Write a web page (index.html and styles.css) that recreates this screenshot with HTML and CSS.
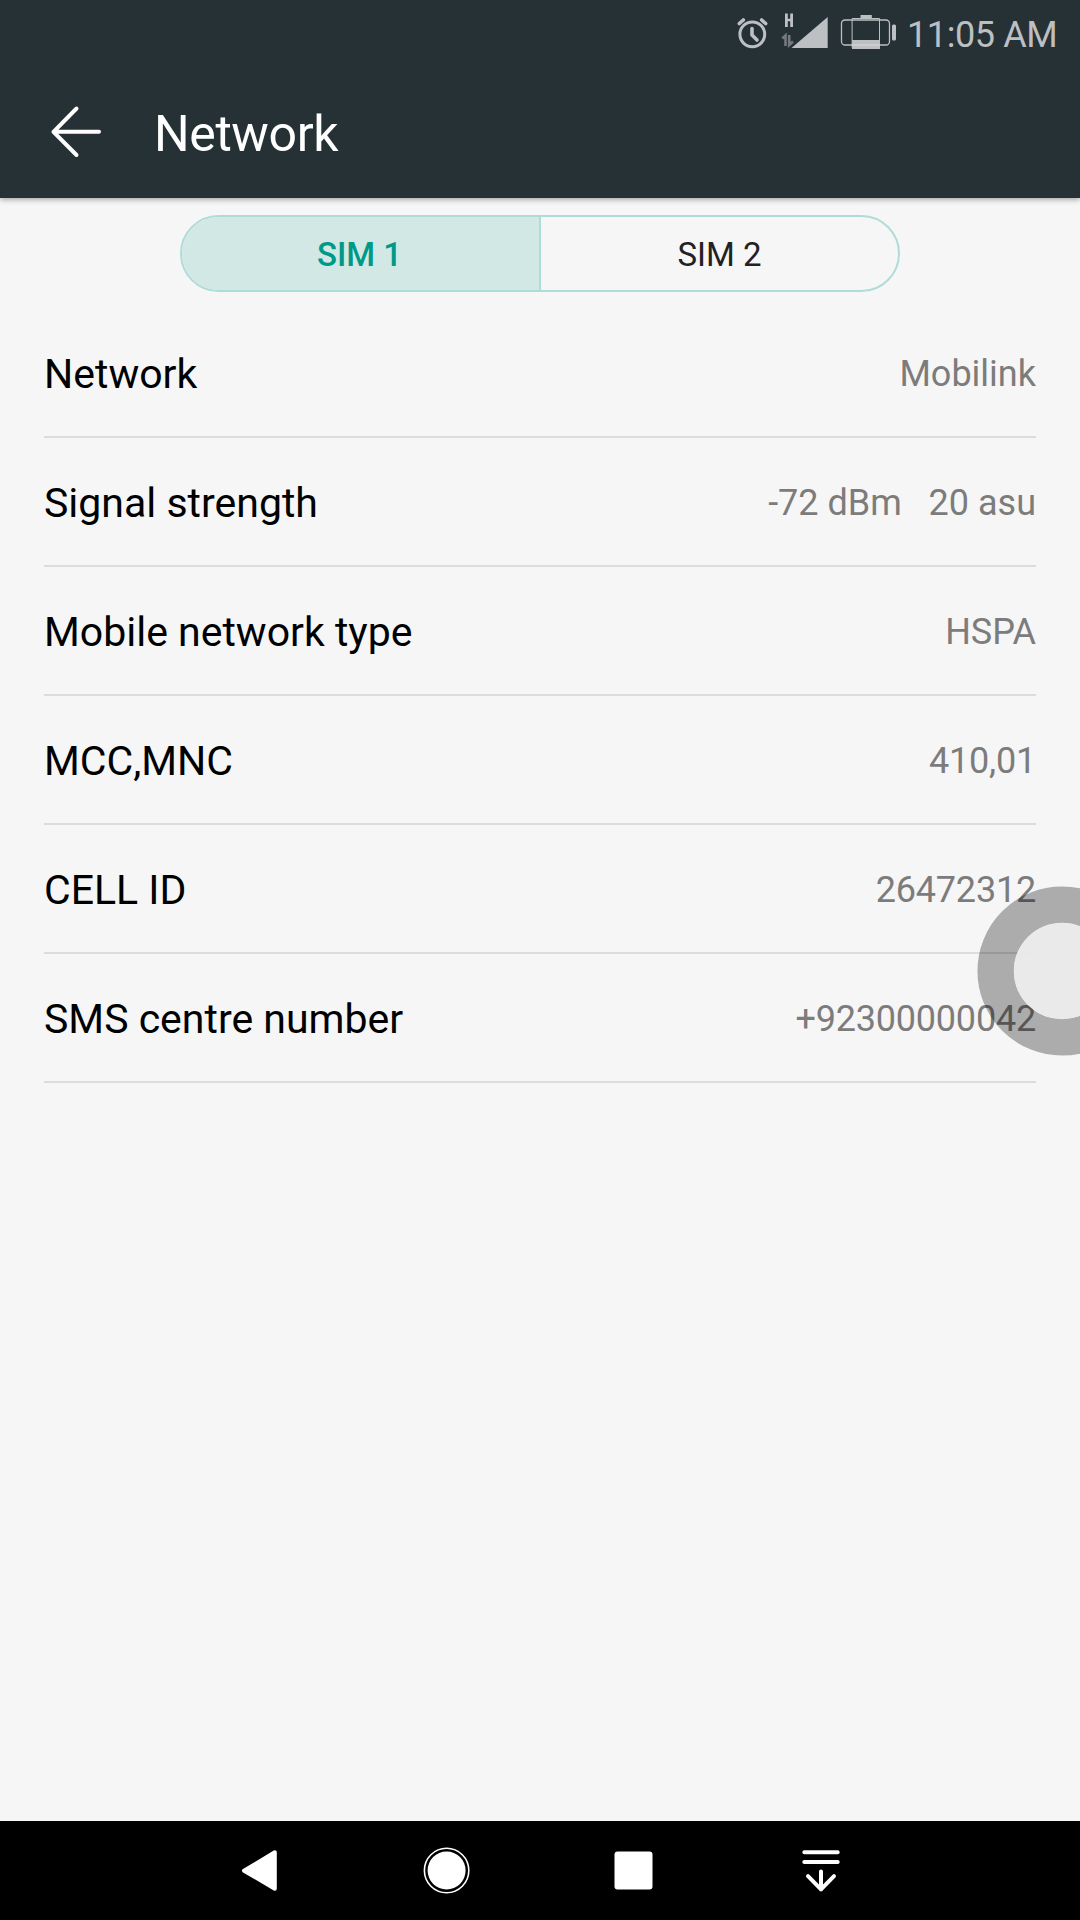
FILE: index.html
```html
<!DOCTYPE html>
<html lang="en">
<head>
<meta charset="utf-8">
<title>Network</title>
<link rel="stylesheet" href="styles.css">
</head>
<body>
<div class="screen">
  <header class="header">
    <div class="status-bar">
      <svg class="status-icons" width="180" height="60" viewBox="720 0 180 60">
        <g fill="none" stroke="#bdc0c2" stroke-linecap="round" stroke-linejoin="round">
          <circle cx="752.3" cy="34.3" r="12.4" stroke-width="3"/>
          <path d="M752 28.500v6.500l5 5" stroke-width="3.600"/>
          <path d="M739.300 23.500l4-3.500M765.700 23.500l-4-3.500" stroke-width="3.600"/>
          <rect x="841.500" y="20" width="48" height="25" rx="3.500" stroke-width="1.300"/>
          <rect x="852.500" y="18.500" width="27" height="29" stroke-width="1"/>
        </g>
        <g fill="#bdc0c2">
          <path d="M785 13.500h2.800v5.300h2.400v-5.300h2.800v13.500h-2.800v-5.700h-2.400v5.700h-2.800z"/>
          <path d="M791.500 48L827.700 17v31z"/>
          <rect x="860.500" y="15" width="11.300" height="3.500"/>
          <rect x="852" y="40" width="28" height="9"/>
          <rect x="892" y="24.500" width="4" height="16" rx="1.500"/>
        </g>
        <path d="M852 45h28" stroke="#d8dadb"/>
        <path d="M782.300 38.500L785.500 35.500V46M789.200 35V45L793 41.500" fill="none" stroke="#747a7d" stroke-width="2.600"/>
      </svg>
      <span class="clock">11:05 AM</span>
    </div>
    <div class="title-bar">
      <svg class="back" width="54" height="54" viewBox="48 105 54 54">
        <path d="M76.500 108.500L53.500 131.800L76.500 155M53.500 131.800H99" fill="none" stroke="#fff" stroke-width="4" stroke-linecap="round" stroke-linejoin="round"/>
      </svg>
      <h1 class="title">Network</h1>
    </div>
  </header>

  <main class="content">
    <div class="tabs">
      <div class="tab tab-active">SIM 1</div>
      <div class="tab">SIM 2</div>
    </div>
    <div class="list">
      <div class="row"><span class="label">Network</span><span class="value">Mobilink</span></div>
      <div class="row"><span class="label">Signal strength</span><span class="value">-72 dBm   20 asu</span></div>
      <div class="row"><span class="label">Mobile network type</span><span class="value">HSPA</span></div>
      <div class="row"><span class="label">MCC,MNC</span><span class="value digits">410,01</span></div>
      <div class="row"><span class="label">CELL ID</span><span class="value digits">26472312</span></div>
      <div class="row"><span class="label">SMS centre number</span><span class="value digits">+92300000042</span></div>
    </div>
  </main>

  <svg class="float-button" width="110" height="180" viewBox="970 881 110 180">
    <circle cx="1062" cy="971" r="66.300" fill="none" stroke="#000" stroke-opacity=".3" stroke-width="36.500"/>
    <circle cx="1062" cy="971" r="48.200" fill="#e9e9e9" fill-opacity=".97"/>
  </svg>

  <nav class="nav-bar">
    <svg width="56" height="56" viewBox="232 1843 56 56"><path d="M244 1870.700L274.800 1852.300V1888.700Z" fill="#fff" stroke="#fff" stroke-width="4" stroke-linejoin="round"/></svg>
    <svg width="56" height="56" viewBox="419 1843 56 56"><circle cx="446.600" cy="1870.500" r="19" fill="#fff"/><circle cx="446.600" cy="1870.500" r="22.200" fill="none" stroke="#fff" stroke-width="1.600"/></svg>
    <svg width="56" height="56" viewBox="606 1843 56 56"><rect x="614.500" y="1851.500" width="38" height="38" rx="3" fill="#fff"/></svg>
    <svg width="56" height="56" viewBox="793 1843 56 56"><path d="M804.300 1852.300h33.400M804.300 1862h33.400M821 1871.500v18M808 1876.200L821 1889.300L834 1876.200" fill="none" stroke="#fff" stroke-width="4" stroke-linecap="round" stroke-linejoin="round"/></svg>
  </nav>
</div>
</body>
</html>
```
FILE: styles.css
```css
* { box-sizing: border-box; }

body {
  margin: 0;
  font-family: Roboto, "Liberation Sans", sans-serif;
}

.screen {
  position: relative;
  display: flex;
  flex-direction: column;
  width: 1080px;
  height: 1920px;
  overflow: hidden;
  background: #f6f6f6;
}

.header {
  height: 198px;
  background: #263136;
  box-shadow: 0 1px 6px rgba(0, 0, 0, .4);
}

.status-bar {
  display: flex;
  justify-content: flex-end;
  height: 66px;
  padding-right: 20px;
}

.status-icons { flex: none; }

.clock {
  width: 160px;
  padding-left: 7px;
  font-size: 36px;
  line-height: 70px;
  letter-spacing: -.4px;
  white-space: nowrap;
  color: #bdc0c2;
}

.title-bar {
  display: flex;
  align-items: center;
  height: 132px;
  padding-left: 48px;
}

.title {
  margin: 4px 0 0 52px;
  font-size: 50px;
  font-weight: 400;
  line-height: 60px;
  letter-spacing: -.4px;
  color: #fff;
}

.content {
  flex: 1;
  padding: 17px 44px 0;
}

.tabs {
  display: flex;
  width: 720px;
  height: 77px;
  margin: 0 auto 17px;
  border: 2px solid #b0dcd7;
  border-radius: 39px;
  overflow: hidden;
}

.tab {
  flex: 1;
  font-size: 33px;
  line-height: 75px;
  text-align: center;
  color: #222;
}

.tab-active {
  flex: 0 0 359px;
  padding-right: 2px;
  border-right: 2px solid #b0dcd7;
  background: #d2e8e4;
  font-weight: 500;
  color: #009987;
}

.row {
  display: flex;
  align-items: center;
  justify-content: space-between;
  height: 129px;
  padding-top: 2px;
  border-bottom: 2px solid #dcdcdc;
}

.label {
  font-size: 41px;
  color: #000;
}

.value {
  font-size: 36px;
  white-space: pre;
  color: #7c7c7c;
}

.digits { letter-spacing: -.2px; }

.float-button {
  position: absolute;
  top: 881px;
  right: 0;
}

.nav-bar {
  display: flex;
  align-items: flex-start;
  gap: 131px;
  height: 99px;
  padding: 22px 0 0 232px;
  background: #000;
}
```
